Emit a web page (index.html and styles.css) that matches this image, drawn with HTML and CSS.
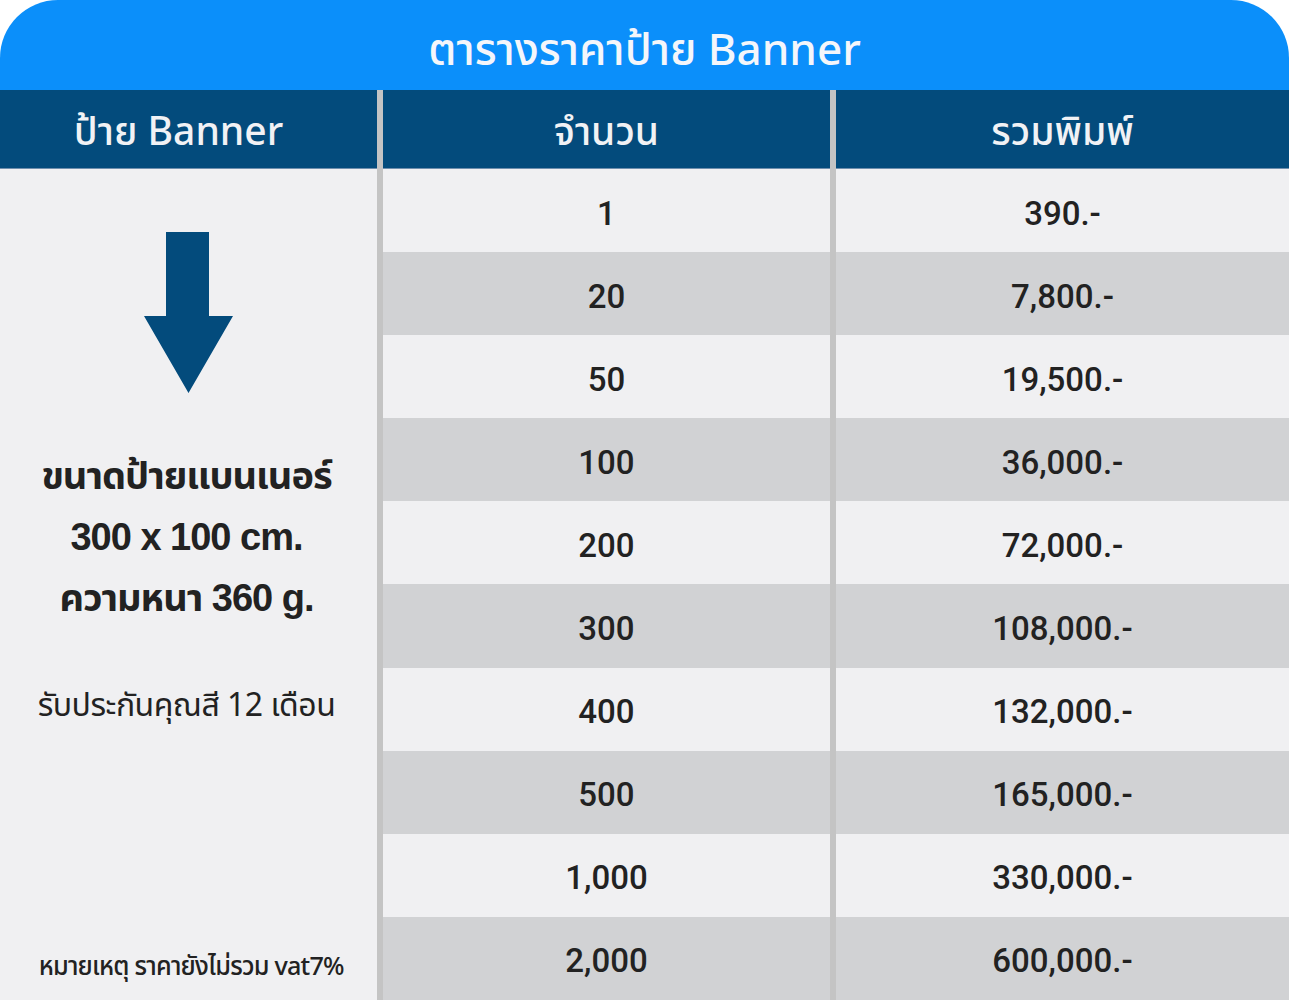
FILE: index.html
```html
<!DOCTYPE html>
<html lang="th">
<head>
<meta charset="utf-8">
<title>ตารางราคาป้าย Banner</title>
<link rel="stylesheet" href="styles.css">
</head>
<body>
<div class="board">
  <div class="title">ตารางราคาป้าย Banner</div>
  <div class="table">
    <div class="head">ป้าย Banner</div>
    <div class="head">จำนวน</div>
    <div class="head">รวมพิมพ์</div>

    <div class="info">
      <svg class="arrow" width="89" height="161" viewBox="0 0 89 161">
        <polygon points="22,0 65,0 65,84 89,84 44.5,161 0,84 22,84" fill="#034b7c"/>
      </svg>
      <div class="spec">ขนาดป้ายแบนเนอร์<br>300 x 100 cm.<br>ความหนา 360 g.</div>
      <div class="warranty">รับประกันคุณสี 12 เดือน</div>
      <div class="note">หมายเหตุ ราคายังไม่รวม vat7%</div>
    </div>

    <div class="cell">1</div><div class="cell">390.-</div>
    <div class="cell alt">20</div><div class="cell alt">7,800.-</div>
    <div class="cell">50</div><div class="cell">19,500.-</div>
    <div class="cell alt">100</div><div class="cell alt">36,000.-</div>
    <div class="cell">200</div><div class="cell">72,000.-</div>
    <div class="cell alt">300</div><div class="cell alt">108,000.-</div>
    <div class="cell">400</div><div class="cell">132,000.-</div>
    <div class="cell alt">500</div><div class="cell alt">165,000.-</div>
    <div class="cell">1,000</div><div class="cell">330,000.-</div>
    <div class="cell alt">2,000</div><div class="cell alt">600,000.-</div>
  </div>
</div>
</body>
</html>
```

FILE: styles.css
```css
html, body {
  margin: 0;
  padding: 0;
  background: #ffffff;
}

body {
  width: 1289px;
  height: 1002px;
  overflow: hidden;
  font-family: "Noto Sans", "Noto Sans Thai", "Liberation Sans", sans-serif;
}

.board {
  width: 1289px;
}

.title {
  height: 90px;
  background: #0b8ffa;
  border-radius: 58px 58px 0 0;
  color: #f4f6fa;
  font-size: 44px;
  font-weight: 500;
  display: flex;
  align-items: center;
  justify-content: center;
  box-sizing: border-box;
  padding-top: 13px;
}

.table {
  display: grid;
  grid-template-columns: 377px 447px 453px;
  grid-template-rows: 79px repeat(10, 83.1px);
  column-gap: 6px;
  background: #c4c4c4;
}

.head {
  background: #034b7c;
  color: #f1f2f5;
  font-size: 39px;
  font-weight: 500;
  display: flex;
  align-items: center;
  justify-content: center;
  border-bottom: 1px solid #6f8fae;
  padding-top: 8px;
  box-sizing: border-box;
}

.head:first-child {
  padding-right: 20px;
}

.info {
  grid-column: 1;
  grid-row: 2 / span 10;
  background: #f0f0f2;
  display: flex;
  flex-direction: column;
  align-items: center;
  color: #222222;
  padding-top: 63px;
  padding-bottom: 20px;
  padding-right: 4px;
}

.arrow {
  display: block;
  margin-left: 4px;
}

.spec {
  margin-top: 53px;
  font-family: "Liberation Sans", "Noto Sans", "Noto Sans Thai", sans-serif;
  font-size: 38px;
  font-weight: 700;
  line-height: 61px;
  letter-spacing: -1px;
  text-align: center;
}

.warranty {
  margin-top: 54px;
  font-size: 32px;
  line-height: 42px;
  letter-spacing: -0.5px;
}

.note {
  margin-top: auto;
  font-size: 26px;
  font-weight: 500;
  line-height: 30px;
  letter-spacing: -0.8px;
  transform: scaleX(0.97);
  margin-left: 10px;
}

.cell {
  background: #f0f0f2;
  color: #222222;
  font-family: "Roboto", "Liberation Sans", sans-serif;
  font-weight: 500;
  font-size: 33px;
  display: flex;
  align-items: center;
  justify-content: center;
  padding-top: 5px;
  box-sizing: border-box;
}

.cell.alt {
  background: #d1d2d4;
}
```
